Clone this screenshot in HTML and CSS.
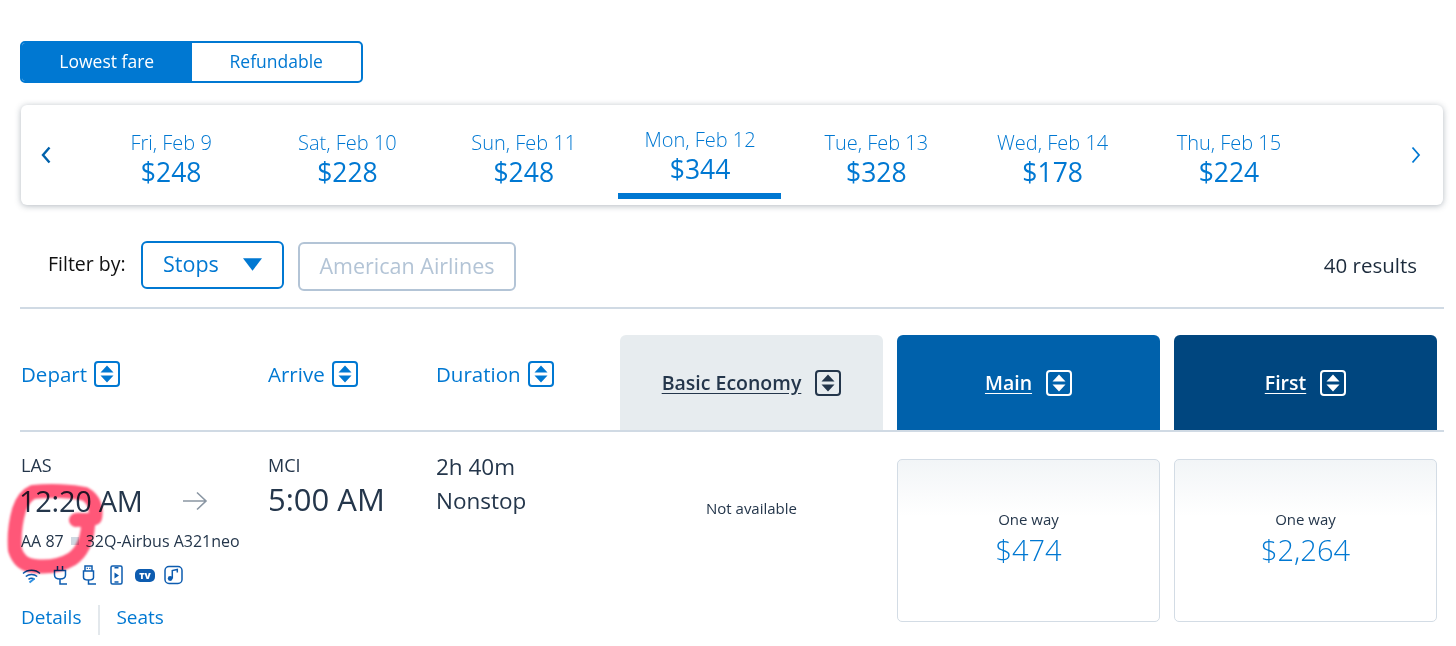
FILE: index.html
```html
<!DOCTYPE html>
<html lang="en">
<head>
<meta charset="utf-8">
<title>Flight results</title>
<link rel="stylesheet" href="styles.css">
</head>
<body>
<main class="page">
  <div class="toggle">
    <span class="toggle-item active">Lowest fare</span>
    <span class="toggle-item">Refundable</span>
  </div>

  <section class="dates">
    <span class="chev"><svg viewBox="0 0 10 18"><path d="M8.500 1.500L2 9l6.500 7.500"/></svg></span>
    <div class="tab"><span class="d">Fri, Feb 9</span><span class="p">$248</span></div>
    <div class="tab"><span class="d">Sat, Feb 10</span><span class="p">$228</span></div>
    <div class="tab"><span class="d">Sun, Feb 11</span><span class="p">$248</span></div>
    <div class="tab selected"><span class="d">Mon, Feb 12</span><span class="p">$344</span></div>
    <div class="tab"><span class="d">Tue, Feb 13</span><span class="p">$328</span></div>
    <div class="tab"><span class="d">Wed, Feb 14</span><span class="p">$178</span></div>
    <div class="tab"><span class="d">Thu, Feb 15</span><span class="p">$224</span></div>
    <span class="chev right"><svg viewBox="0 0 10 18"><path d="M1.500 1.500L8 9l-6.500 7.500"/></svg></span>
  </section>

  <div class="filters">
    <span class="filter-label">Filter by:</span>
    <span class="stops">Stops<svg class="caret" viewBox="0 0 18 12"><path d="M0 0h18L9 12z"/></svg></span>
    <span class="airline">American Airlines</span>
    <span class="results">40 results</span>
  </div>

  <div class="head">
    <div class="sort">Depart<svg class="sorter" viewBox="0 0 26 26"><use href="#s"/></svg></div>
    <div class="sort">Arrive<svg class="sorter" viewBox="0 0 26 26"><use href="#s"/></svg></div>
    <div class="sort">Duration<svg class="sorter" viewBox="0 0 26 26"><use href="#s"/></svg></div>
    <div class="cabin basic"><u>Basic Economy</u><svg class="sorter" viewBox="0 0 26 26"><use href="#s"/></svg></div>
    <div class="cabin main-c"><u>Main</u><svg class="sorter" viewBox="0 0 26 26"><use href="#s"/></svg></div>
    <div class="cabin first"><u>First</u><svg class="sorter" viewBox="0 0 26 26"><use href="#s"/></svg></div>
  </div>

  <div class="row">
    <div class="depart">
      <div class="code">LAS</div>
      <div class="time-line"><span class="time t-dep">12:20 AM</span>
        <svg class="arrow" viewBox="0 0 26 20"><path d="M1 10h23M15 1.500l9 8.500-9 8.500"/></svg></div>
      <div class="flight">AA 87<i class="dot"></i>32Q-Airbus A321neo</div>
      <div class="amen">
        <svg class="ic wifi" viewBox="0 0 19 17"><path d="M1 6.500C5.500 2.300 13.500 2.300 18 6.500M3.800 9.500C7 6.800 12 6.800 15.200 9.500M6.500 12.300c1.800-1.300 4.200-1.300 6 0"/><path class="light" d="M7.500 15.500l5-4"/></svg>
        <svg class="ic plug" viewBox="0 0 15 20"><path d="M4.500 1v4.500M9.500 1v4.500M1.500 5.500h11v4.500c0 2.500-2 4-5.500 4s-5.500-1.500-5.500-4zM7 14v5h7"/></svg>
        <svg class="ic usb" viewBox="0 0 14 20"><path d="M3 1h7v5H3zM1.500 6h10v6.500c0 1.500-1.500 2.500-5 2.500s-5-1-5-2.500zM6.500 15v4H14"/><path class="fillp" d="M4.700 2.800h1.200v1.200H4.700zM7.200 2.800h1.200v1.200H7.200z"/></svg>
        <svg class="ic phone" viewBox="0 0 13 20"><rect x="1" y="1" width="11" height="18" rx="1.500"/><path class="fillp" d="M4.500 7.500l4.500 3-4.500 3z"/><path d="M4.500 2.800h4M4.500 17h4"/></svg>
        <span class="tv">TV</span>
        <svg class="ic music" viewBox="0 0 19 20"><rect x="1" y="1.500" width="17" height="17" rx="4"/><path d="M8.300 13.500V5.500l5-1v3"/><circle class="fillp" cx="6.200" cy="13.500" r="2.400"/></svg>
      </div>
      <div class="links"><a>Details</a><a class="seats">Seats</a></div>
    </div>
    <div class="arrive">
      <div class="code">MCI</div>
      <div class="time">5:00 AM</div>
    </div>
    <div class="duration">
      <div>2h 40m</div>
      <div class="nonstop">Nonstop</div>
    </div>
    <div class="na">Not available</div>
    <div class="fare"><span class="way">One way</span><span class="amount">$474</span></div>
    <div class="fare"><span class="way">One way</span><span class="amount">$2,264</span></div>
  </div>
</main>

<svg class="defs" width="0" height="0"><defs>
  <g id="s"><rect x="1" y="1" width="24" height="24" rx="3" fill="none" stroke="currentColor" stroke-width="2"/><path fill="currentColor" d="M13 4.500l6.500 7h-13zM13 21.500l-6.500-7h13z"/></g>
</defs></svg>

<svg class="scribble" viewBox="0 0 120 105">
  <path d="M76 40C80 39 88 42 95 38C97 28 94 19 85 14C72 11 50 10 33 12C26 15 22 21 19 30C15 44 14 58 15 70C18 80 24 85 34 86C50 88 62 85 72 79C82 72 87 60 88 46"/>
</svg>
</body>
</html>
```
FILE: styles.css
```css
* { box-sizing: border-box; }
html, body { margin: 0; height: 100%; overflow: hidden; background: #fff; }
body { position: relative; font-family: "Open Sans", "Liberation Sans", sans-serif; font-weight: 300; color: #24364b; }
.page { padding: 41px 12px 0 20px; }
.defs { position: absolute; }

.toggle { display: flex; width: 343px; height: 42px; border: 2px solid #0078d2; border-radius: 5px; overflow: hidden; font-size: 17.500px; font-weight: 400; color: #0078d2; }
.toggle-item { flex: 0 0 50%; display: flex; align-items: center; justify-content: center; padding-bottom: 3px; }
.toggle-item.active { background: #0078d2; color: #fff; }

.dates { display: grid; grid-template-columns: 62px repeat(7, 176.3px) 1fr; height: 100px; margin: 22px 1px 0; background: #fff; border-radius: 6px; box-shadow: 0 1px 6px rgba(36,54,75,.35); color: #0078d2; }
.chev { display: flex; align-items: center; padding-left: 20px; }
.chev.right { justify-content: flex-end; padding: 0 22px 0 0; }
.chev svg { width: 10px; height: 18px; fill: none; stroke: #0061ab; stroke-width: 2.400; }
.chev.right svg { stroke: #0078d2; stroke-width: 1.800; }
.tab { display: flex; flex-direction: column; align-items: center; padding-top: 24px; }
.tab .d { font-size: 20px; line-height: 28px; }
.tab .p { font-size: 26.500px; line-height: 30px; font-weight: 400; }
.tab.selected { padding-top: 21px; position: relative; }
.tab.selected::after { content: ""; position: absolute; left: 6px; right: 7px; bottom: 6px; height: 6px; background: #0078d2; }

.filters { display: flex; align-items: flex-start; height: 50px; margin-top: 36px; padding-left: 28px; padding-right: 27px; }
.filter-label { flex: 0 0 93px; font-size: 19.500px; line-height: 46px; font-weight: 400; color: #111; white-space: nowrap; }
.stops { display: flex; align-items: center; justify-content: space-between; width: 143px; height: 48px; padding: 0 20px 3px; border: 2px solid #0078d2; border-radius: 6px; font-size: 21.500px; font-weight: 400; color: #0078d2; }
.caret { width: 19px; height: 13px; margin-top: 1px; fill: #0078d2; }
.airline { display: flex; align-items: center; justify-content: center; width: 218px; height: 49px; margin: 1px 0 0 14px; padding-bottom: 3px; border: 2px solid #b3c4d6; border-radius: 6px; font-size: 21.500px; font-weight: 400; color: #b3c4d6; }
.results { margin-left: auto; font-size: 20.500px; line-height: 48px; font-weight: 400; color: #1c2b3c; }

.head { display: grid; grid-template-columns: 247px 168px 184px 263px 263px 263px; height: 125px; margin-top: 16px; padding: 26px 0 0 1px; border-top: 2px solid #d0dae4; border-bottom: 2px solid #d0dae4; }
.sort { display: flex; align-items: center; gap: 7px; height: 78px; font-size: 20.500px; font-weight: 400; color: #0078d2; }
.sorter { width: 26px; height: 26px; flex: none; }
.cabin { display: flex; align-items: center; justify-content: center; gap: 14px; height: 95px; border-radius: 6px 6px 0 0; font-size: 19.500px; font-weight: 600; }
.cabin u { text-underline-offset: 3px; }
.basic { background: #e7ecef; color: #24364b; }
.main-c { background: #0061ab; color: #fff; margin-left: 14px; margin-right: -14px; }
.first { background: #00467f; color: #fff; margin-left: 28px; margin-right: -28px; }

.row { display: grid; grid-template-columns: 247px 168px 184px 263px 263px 263px; padding: 21px 0 0 1px; }
.code { font-size: 18px; font-weight: 400; line-height: 24px; }
.time { font-size: 31px; font-weight: 400; line-height: 40px; }
.time.t-dep { font-size: 29px; letter-spacing: -.3px; margin-left: -2px; }
.time-line { display: flex; align-items: center; gap: 39px; margin-top: 4px; }
.arrive .time { margin-top: 2px; }
.arrow { width: 26px; height: 20px; fill: none; stroke: #8a96a3; stroke-width: 1.600; }
.flight { display: flex; align-items: center; margin-top: 9px; font-size: 16px; font-weight: 400; line-height: 22px; }
.dot { width: 8px; height: 8px; margin: 0 7px; background: #cfd9e2; }
.amen { display: flex; align-items: center; margin-top: 13px; height: 20px; }
.ic { height: 20px; flex: none; fill: none; stroke: #0d5cb0; stroke-width: 1.500; }
.ic .fillp { fill: #0d5cb0; stroke: none; }
.ic .light { stroke: #2f8fe0; stroke-width: 2; }
.wifi { width: 19px; height: 17px; margin-left: 1px; }
.plug { width: 15px; margin-left: 12px; }
.usb { width: 14px; margin-left: 14px; }
.phone { width: 13px; margin-left: 14px; }
.music { width: 19px; margin-left: 9px; }
.tv { display: flex; align-items: center; justify-content: center; flex: none; width: 20px; height: 13px; margin-left: 12px; border-radius: 5px; background: #0d5cb0; color: #fff; font-size: 9px; font-weight: 800; }
.links { display: flex; margin-top: 20px; font-size: 19px; font-weight: 400; color: #0078d2; line-height: 24px; }
.seats { margin-left: 17px; padding-left: 16px; border-left: 2px solid #e3e8ec; height: 30px; }
.duration { margin-top: -3px; font-size: 22.500px; font-weight: 400; line-height: 34px; }
.na { display: flex; justify-content: center; padding-top: 44px; font-size: 15px; font-weight: 400; line-height: 22px; }
.fare { display: flex; flex-direction: column; align-items: center; width: 263px; height: 163px; margin-top: 6px; padding-top: 48px; border: 1.500px solid #d3dce5; border-radius: 5px; background: linear-gradient(#f2f5f7, #fff 35%); }
.row .fare:nth-of-type(5) { margin-left: 14px; }
.row .fare:nth-of-type(6) { margin-left: 28px; }
.way { font-size: 15px; font-weight: 400; line-height: 22px; }
.amount { font-size: 29px; font-weight: 300; line-height: 40px; color: #0078d2; }

.scribble { position: absolute; left: 0; top: 480px; width: 120px; height: 105px; fill: none; stroke: #ff3a60; stroke-opacity: .85; stroke-width: 14; stroke-linecap: round; stroke-linejoin: round; mix-blend-mode: multiply; filter: blur(.8px); }
```
